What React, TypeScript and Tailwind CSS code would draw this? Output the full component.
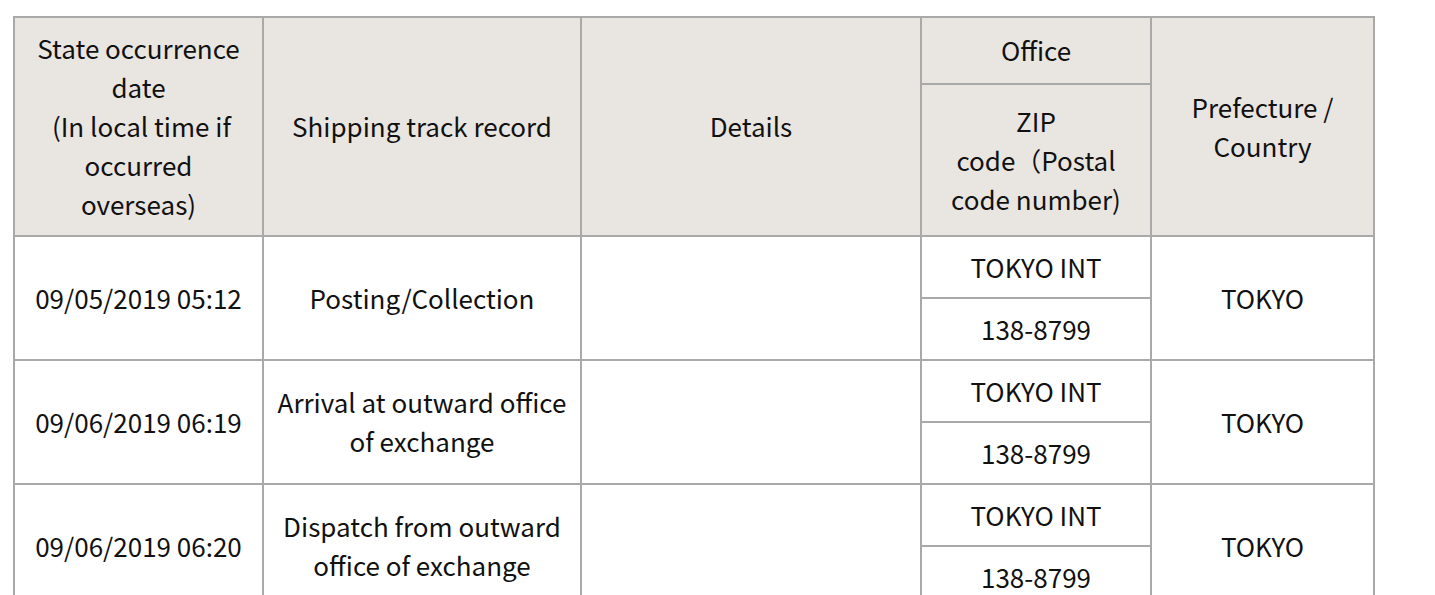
import React from 'react';

type TrackRow = {
  date: string;
  record: string[];
  details: string;
  office: string;
  zip: string;
  prefecture: string;
};

const ROWS: TrackRow[] = [
  {
    date: '09/05/2019 05:12',
    record: ['Posting/Collection'],
    details: '',
    office: 'TOKYO INT',
    zip: '138-8799',
    prefecture: 'TOKYO',
  },
  {
    date: '09/06/2019 06:19',
    record: ['Arrival at outward office', 'of exchange'],
    details: '',
    office: 'TOKYO INT',
    zip: '138-8799',
    prefecture: 'TOKYO',
  },
  {
    date: '09/06/2019 06:20',
    record: ['Dispatch from outward', 'office of exchange'],
    details: '',
    office: 'TOKYO INT',
    zip: '138-8799',
    prefecture: 'TOKYO',
  },
];

// shared cell look: 2px grey rule, centred text
const cell = 'border-2 border-[#a9a9a9] text-center align-middle px-1 pt-0 pb-[2px] font-normal';

function Lines({ lines }: { lines: string[] }) {
  return (
    <>
      {lines.map((line, i) => (
        <span key={i} className="block whitespace-pre">
          {line}
        </span>
      ))}
    </>
  );
}

export default function App() {
  return (
    <div
      className="min-h-screen bg-white pl-[13px] pt-[16px] text-[#111] text-[26px] leading-[39px]"
      style={{ fontFamily: '"Noto Sans CJK JP", "Noto Sans", sans-serif' }}
    >
      <table className="table-fixed border-collapse w-[1362px]">
        <colgroup>
          <col className="w-[249px]" />
          <col className="w-[318px]" />
          <col className="w-[340px]" />
          <col className="w-[230px]" />
          <col className="w-[223px]" />
        </colgroup>
        <thead className="bg-[#e9e5e1]">
          <tr className="h-[67px]">
            <th rowSpan={2} className={cell}>
              <Lines lines={['State occurrence', 'date', ' (In local time if', 'occurred', 'overseas)']} />
            </th>
            <th rowSpan={2} className={cell}>
              Shipping track record
            </th>
            <th rowSpan={2} className={cell}>
              Details
            </th>
            <th className={cell}>Office</th>
            <th rowSpan={2} className={cell}>
              <Lines lines={['Prefecture /', 'Country']} />
            </th>
          </tr>
          <tr className="h-[152px]">
            <th className={cell}>
              <Lines lines={['ZIP', 'code（Postal', 'code number)']} />
            </th>
          </tr>
        </thead>
        <tbody>
          {ROWS.map((row, i) => (
            <React.Fragment key={i}>
              <tr className="h-[62px]">
                <td rowSpan={2} className={cell}>
                  {row.date}
                </td>
                <td rowSpan={2} className={cell}>
                  <Lines lines={row.record} />
                </td>
                <td rowSpan={2} className={cell}>
                  {row.details}
                </td>
                <td className={cell}>{row.office}</td>
                <td rowSpan={2} className={cell}>
                  {row.prefecture}
                </td>
              </tr>
              <tr className="h-[62px]">
                <td className={cell}>{row.zip}</td>
              </tr>
            </React.Fragment>
          ))}
        </tbody>
      </table>
    </div>
  );
}
